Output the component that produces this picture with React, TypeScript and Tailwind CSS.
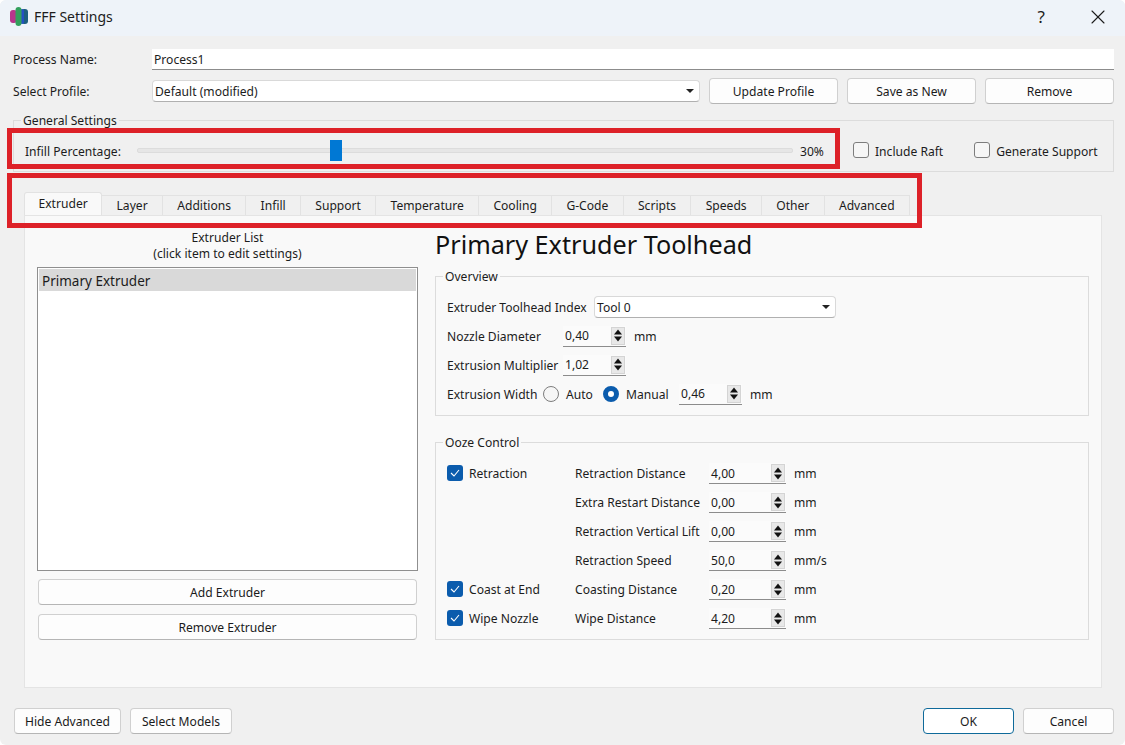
import { X } from "lucide-react";
import type { ReactNode } from "react";

const font = "font-['Noto_Sans','Liberation_Sans',sans-serif]";

function PushButton({ label, className = "" }: { label: string; className?: string }) {
  return (
    <button className={`h-[26px] shrink-0 rounded-[4px] border border-[#d0d0d0] border-b-[#b5b5b5] bg-[#fdfdfd] pt-[2px] text-[12.1px] text-[#1a1a1a] ${className}`}>
      {label}
    </button>
  );
}

function Combo({ value, className = "" }: { value: string; className?: string }) {
  return (
    <div className={`flex h-[22px] items-center justify-between rounded-[4px] border border-[#d9d9d9] border-b-[#b0b0b0] bg-white pl-[2px] pr-[5px] text-[12.1px] ${className}`}>
      <span className="pt-[2px]">{value}</span>
      <svg width="8" height="4" viewBox="0 0 8 4">
        <path d="M0 0h8L4 4z" fill="#222" />
      </svg>
    </div>
  );
}

function Spin({ value, className = "w-[63px]" }: { value: string; className?: string }) {
  return (
    <div className={`flex h-[21px] items-center justify-between border-b border-[#8c8c8c] bg-[#fbfbfb] pl-[2px] pr-[1px] text-[12.1px] ${className}`}>
      <span className="pt-[2px]">{value}</span>
      <div className="flex h-[18px] w-[14px] flex-col items-center justify-center gap-[1px] border border-[#d4d4d4] bg-[#e8e8e8]">
        <svg width="8" height="6" viewBox="0 0 8 6"><path d="M0 5.5L4 .5l4 5z" fill="#111" /></svg>
        <svg width="8" height="6" viewBox="0 0 8 6"><path d="M0 .5h8L4 5.5z" fill="#111" /></svg>
      </div>
    </div>
  );
}

function Check({ checked = false }: { checked?: boolean }) {
  if (checked) {
    return (
      <span className="flex h-4 w-4 items-center justify-center rounded-[3px] bg-[#0b5cad]">
        <svg width="10" height="8" viewBox="0 0 10 8" fill="none">
          <path d="M1 4l3 3 5-6" stroke="#fff" strokeWidth="1.1" />
        </svg>
      </span>
    );
  }
  return <span className="h-4 w-4 rounded-[3px] border border-[#7d7d7d] bg-[#f6f6f6]" />;
}

function Group({ title, className = "", children }: { title: string; className?: string; children: ReactNode }) {
  return (
    <fieldset className={`border border-[#dcdcdc] ${className}`}>
      <legend className="ml-[7px] px-[2px] pt-[2px] text-[12.1px] leading-[14px]">{title}</legend>
      {children}
    </fieldset>
  );
}

function Label({ text, className = "" }: { text: string; className?: string }) {
  return <span className={`pt-[2px] ${className}`}>{text}</span>;
}

const tabs = ["Layer", "Additions", "Infill", "Support", "Temperature", "Cooling", "G-Code", "Scripts", "Speeds", "Other", "Advanced"];

const ooze: { check?: string; label: string; value: string; unit: string }[] = [
  { check: "Retraction", label: "Retraction Distance", value: "4,00", unit: "mm" },
  { label: "Extra Restart Distance", value: "0,00", unit: "mm" },
  { label: "Retraction Vertical Lift", value: "0,00", unit: "mm" },
  { label: "Retraction Speed", value: "50,0", unit: "mm/s" },
  { check: "Coast at End", label: "Coasting Distance", value: "0,20", unit: "mm" },
  { check: "Wipe Nozzle", label: "Wipe Distance", value: "4,20", unit: "mm" },
];

export default function App() {
  return (
    <div className={`relative flex h-[745px] w-[1125px] flex-col overflow-hidden rounded-[6px] bg-[#f0f0f0] text-[#1c1c1c] ${font}`}>
      {/* Title bar */}
      <div className="flex h-[36px] items-center bg-[#eef3f9] pb-[3px] pl-[10px]">
        <svg width="18" height="19" viewBox="0 0 18 19">
          <rect x="0" y="3" width="7" height="13" rx="3" fill="#b8358c" />
          <rect x="11" y="2" width="7" height="15" rx="3" fill="#1c5f80" />
          <rect x="10" y="2" width="4" height="15" rx="2" fill="#2450c4" />
          <rect x="5.5" y="0" width="6" height="19" rx="3" fill="#33a05c" />
        </svg>
        <span className="ml-[6px] text-[14px]">FFF Settings</span>
        <span className="ml-auto text-[17px]">?</span>
        <X className="ml-[41px] mr-[15px] h-6 w-6" strokeWidth={1.1} />
      </div>

      <div className="flex flex-1 flex-col px-[13px]">
        {/* Process name */}
        <div className="mt-[13px] flex h-[21px] items-center text-[12.1px]">
          <Label text="Process Name:" className="w-[139px]" />
          <div className="mr-[-2px] flex h-[21px] flex-1 items-center border-b border-[#8c8c8c] bg-white pl-[2px] pt-[2px]">Process1</div>
        </div>

        {/* Profile */}
        <div className="mt-[8px] mr-[-2px] flex h-[26px] items-center text-[12.1px]">
          <Label text="Select Profile:" className="w-[139px]" />
          <Combo value="Default (modified)" className="w-[548px]" />
          <PushButton label="Update Profile" className="ml-[9px] w-[129px]" />
          <PushButton label="Save as New" className="ml-[9px] w-[129px]" />
          <PushButton label="Remove" className="ml-[9px] w-[129px]" />
        </div>

        {/* General settings */}
        <Group title="General Settings" className="mt-[8px] mr-[-2px] h-[60px]">
          <div className="flex h-[45px] items-center pl-[11px] text-[12.1px]">
            <span className="w-[112px] pt-[4px]">Infill Percentage:</span>
            <div className="flex h-[5px] w-[656px] items-center rounded-[2px] border border-[#dcdcdc] bg-[#e6e6e6]">
              <div className="ml-[192px] h-[21px] w-[12px] shrink-0 bg-[#0078d4]" />
            </div>
            <span className="ml-[7px] w-[27px] pt-[4px]">30%</span>
            <div className="ml-[26px] flex items-center gap-[6px]">
              <Check />
              <span className="pt-[4px]">Include Raft</span>
            </div>
            <div className="ml-[31px] flex items-center gap-[6px]">
              <Check />
              <span className="pt-[4px]">Generate Support</span>
            </div>
          </div>
        </Group>

        {/* Tabs */}
        <div className="mt-[19px] ml-[11px] flex h-[24px] items-end text-[12.1px]">
          <div className="flex h-[23px] items-center rounded-t-[3px] border border-b-0 border-[#e2e2e2] bg-[#f9f9f9] px-[13.5px] pt-[1px]">Extruder</div>
          {tabs.map((t) => (
            <div key={t} className="flex h-[20px] items-center border-r border-t border-[#e2e2e2] bg-[#f0f0f0] px-[14.3px] pt-[2px]">
              {t}
            </div>
          ))}
        </div>

        {/* Tab pane */}
        <div className="ml-[11px] mr-[10px] flex h-[473px] border border-[#e4e4e4] bg-[#f9f9f9] text-[12.1px]">
          <div className="ml-[12px] flex w-[381px] flex-col">
            <div className="mt-[14px] text-center leading-[16px]">
              Extruder List
              <br />
              (click item to edit settings)
            </div>
            <div className="mt-[5px] h-[304px] border border-[#8f8f8f] bg-white p-[1px]">
              <div className="flex h-[22px] items-center bg-[#d9d9d9] pl-[3px] pt-[2px] text-[13.5px]">Primary Extruder</div>
            </div>
            <PushButton label="Add Extruder" className="mx-[1px] mt-[8px]" />
            <PushButton label="Remove Extruder" className="mx-[1px] mt-[9px]" />
          </div>

          <div className="ml-[17px] w-[654px]">
            <h1 className="mt-[10px] text-[25.2px] leading-[36px] text-[#111]">Primary Extruder Toolhead</h1>

            <Group title="Overview" className="mt-[6px] h-[148px]">
              <div className="flex flex-col pl-[11px]">
                <div className="mt-[12px] flex h-[22px] items-center">
                  <Label text="Extruder Toolhead Index" className="w-[147px]" />
                  <Combo value="Tool 0" className="w-[242px]" />
                </div>
                <div className="mt-[7px] flex h-[22px] items-center">
                  <Label text="Nozzle Diameter" className="w-[116px]" />
                  <Spin value="0,40" />
                  <Label text="mm" className="ml-[8px]" />
                </div>
                <div className="mt-[7px] flex h-[22px] items-center">
                  <Label text="Extrusion Multiplier" className="w-[116px]" />
                  <Spin value="1,02" />
                </div>
                <div className="mt-[7px] flex h-[22px] items-center">
                  <Label text="Extrusion Width" className="w-[96px]" />
                  <span className="h-4 w-4 rounded-full border border-[#7d7d7d] bg-[#f6f6f6]" />
                  <Label text="Auto" className="ml-[7px] w-[37px]" />
                  <span className="h-4 w-4 rounded-full border-[5px] border-[#0b5cad] bg-white" />
                  <Label text="Manual" className="ml-[7px] w-[53px]" />
                  <Spin value="0,46" />
                  <Label text="mm" className="ml-[8px]" />
                </div>
              </div>
            </Group>

            <Group title="Ooze Control" className="mt-[18px] h-[206px]">
              <div className="mt-[9px] flex flex-col pl-[11px]">
                {ooze.map((row) => (
                  <div key={row.label} className="flex h-[29px] items-center">
                    <div className="flex w-[128px] items-center gap-[6px]">
                      {row.check && <Check checked />}
                      {row.check && <Label text={row.check} />}
                    </div>
                    <Label text={row.label} className="w-[134px]" />
                    <Spin value={row.value} className="w-[77px]" />
                    <Label text={row.unit} className="ml-[8px]" />
                  </div>
                ))}
              </div>
            </Group>
          </div>
        </div>

        {/* Footer buttons */}
        <div className="mt-[20px] flex text-[12.1px]">
          <PushButton label="Hide Advanced" className="ml-[1px] w-[107px]" />
          <PushButton label="Select Models" className="ml-[9px] w-[102px]" />
          <button className="ml-auto h-[26px] w-[91px] rounded-[4px] border border-[#0f6a9a] bg-white pt-[2px] text-[12.1px]">OK</button>
          <PushButton label="Cancel" className="ml-[9px] mr-[-2px] w-[91px]" />
        </div>
      </div>

      {/* Red annotation boxes */}
      <div className="absolute left-[7px] top-[128px] h-[41px] w-[833px] border-[5px] border-[#dd2128]" />
      <div className="absolute left-[7px] top-[173px] h-[55px] w-[915px] border-[5px] border-[#dd2128]" />
    </div>
  );
}
